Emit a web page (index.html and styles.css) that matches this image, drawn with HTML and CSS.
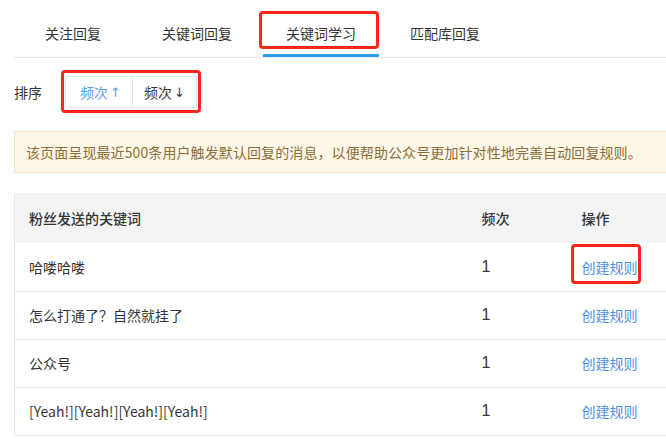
FILE: index.html
```html
<!DOCTYPE html>
<html lang="zh-CN">
<head>
<meta charset="utf-8">
<title>关键词学习</title>
<link rel="stylesheet" href="styles.css">
</head>
<body>
<div class="page">
  <nav class="tabs">
    <a class="tab">关注回复</a>
    <a class="tab">关键词回复</a>
    <a class="tab active">关键词学习</a>
    <a class="tab">匹配库回复</a>
  </nav>

  <div class="sort">
    <span class="sort-label">排序</span>
    <div class="btn-group">
      <a class="btn on">频次<span class="arrow">↑</span></a>
      <a class="btn">频次<span class="arrow">↓</span></a>
    </div>
  </div>

  <div class="notice">该页面呈现最近500条用户触发默认回复的消息，以便帮助公众号更加针对性地完善自动回复规则。</div>

  <table class="table">
    <thead>
      <tr><th class="c-key">粉丝发送的关键词</th><th class="c-freq">频次</th><th class="c-op">操作</th></tr>
    </thead>
    <tbody>
      <tr><td>哈喽哈喽</td><td class="num">1</td><td><a class="link">创建规则</a></td></tr>
      <tr><td>怎么打通了？自然就挂了</td><td class="num">1</td><td><a class="link">创建规则</a></td></tr>
      <tr><td>公众号</td><td class="num">1</td><td><a class="link">创建规则</a></td></tr>
      <tr><td>[Yeah!][Yeah!][Yeah!][Yeah!]</td><td class="num">1</td><td><a class="link">创建规则</a></td></tr>
    </tbody>
  </table>

  <div class="mark mark-tab"></div>
  <div class="mark mark-sort"></div>
  <div class="mark mark-op"></div>
</div>
</body>
</html>
```

FILE: styles.css
```css
html, body {
  margin: 0;
  padding: 0;
  overflow: hidden;
  background: #fff;
}
body {
  font-family: "Noto Sans CJK SC", "Noto Sans", sans-serif;
  font-size: 14px;
  color: #353535;
}
.page {
  position: relative;
  width: 720px;
  padding-left: 14px;
}
.tabs {
  display: flex;
  gap: 8px;
  padding-left: 1px;
  border-bottom: 1px solid #e7e7eb;
}
.tab {
  width: 116px;
  text-align: center;
  padding: 20px 0 8px;
  line-height: 26px;
  border-bottom: 3px solid transparent;
  color: #353535;
}
.tab.active {
  border-bottom-color: #2d9cf0;
}
.sort {
  display: flex;
  align-items: center;
  margin-top: 18px;
  height: 32px;
}
.sort-label {
  width: 51px;
}
.btn-group {
  display: flex;
  border: 1px solid #e4e8eb;
  height: 30px;
}
.btn {
  display: flex;
  align-items: center;
  padding: 0 14px;
  color: #353535;
}
.btn + .btn {
  border-left: 1px solid #e4e8eb;
  padding: 0 11px 0 11px;
}
.btn.on {
  color: #5a9ef5;
  padding: 0 11px 0 14px;
}
.arrow {
  margin-left: 2px;
  font-family: "DejaVu Sans", sans-serif;
  font-size: 13px;
}
.notice {
  margin-top: 23px;
  height: 40px;
  line-height: 40px;
  padding-left: 11px;
  background: #fcf7e6;
  border: 1px solid #f5e6c2;
  color: #8c6d3a;
  white-space: nowrap;
  letter-spacing: 0.1px;
}
.table {
  margin-top: 20px;
  width: 706px;
  table-layout: fixed;
  border-collapse: collapse;
  border-left: 1px solid #e7e7eb;
}
.table th,
.table td {
  box-sizing: border-box;
  padding: 0 0 0 14px;
  text-align: left;
}
.table th {
  background: #f4f4f7;
  height: 50px;
  font-weight: 500;
  color: #353535;
}
.table td {
  height: 48px;
  border-bottom: 1px solid #e7e7eb;
}
.c-key { width: 453px; }
.c-freq { width: 100px; }
.num {
  font-family: "Liberation Sans", sans-serif;
  font-size: 16px;
}
.link {
  color: #4a94ea;
}
.mark {
  position: absolute;
  border: 3px solid #fb2619;
  border-radius: 4px;
  box-sizing: border-box;
}
.mark-tab {
  left: 259px;
  top: 11px;
  width: 120px;
  height: 38px;
}
.mark-sort {
  left: 61px;
  top: 70px;
  width: 140px;
  height: 43px;
}
.mark-op {
  left: 571px;
  top: 244px;
  width: 70px;
  height: 40px;
}
```
